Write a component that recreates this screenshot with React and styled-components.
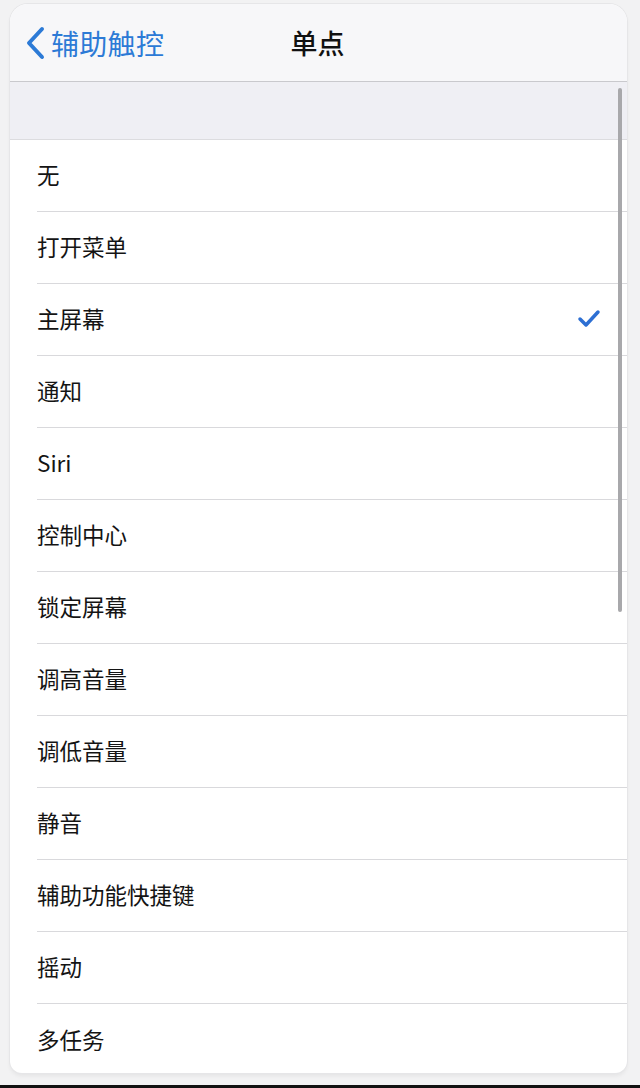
import styled, { createGlobalStyle } from "styled-components";

const Global = createGlobalStyle`
  html, body {
    margin: 0;
    padding: 0;
    background: #f2f2f3;
  }
  body {
    font-family: "Noto Sans CJK SC", "Noto Sans", sans-serif;
  }
`;

// whole photo area
const Page = styled.div`
  width: 640px;
  height: 1088px;
  box-sizing: border-box;
  padding: 4px 13px 0 10px;
  display: flex;
  flex-direction: column;
  overflow: hidden;
`;

const Card = styled.div`
  position: relative;
  height: 1069px;
  border-radius: 18px 18px 12px 12px;
  background: #ffffff;
  box-shadow: 0 0 0 1px #e6e6e8, 0 3px 4px rgba(0, 0, 0, 0.06);
  overflow: hidden;
  display: flex;
  flex-direction: column;
`;

const BottomBar = styled.div`
  margin: 12px -13px 0 -10px;
  height: 3px;
  background: #111;
`;

const NavBar = styled.div`
  height: 77px;
  flex-shrink: 0;
  background: #f7f7f9;
  border-bottom: 1px solid #c9c9cd;
  display: flex;
  align-items: center;
  position: relative;
`;

const Back = styled.div`
  display: flex;
  align-items: center;
  gap: 6px;
  padding-left: 15px;
  color: #2c7ad6;
  font-size: 28px;
  letter-spacing: 0.3px;
`;

const Title = styled.div`
  position: absolute;
  left: 0;
  right: 0;
  top: 0;
  bottom: 0;
  display: flex;
  align-items: center;
  justify-content: center;
  font-size: 27px;
  font-weight: 500;
  color: #111;
  pointer-events: none;
  padding-right: 2px;
`;

const SectionHead = styled.div`
  height: 57px;
  flex-shrink: 0;
  background: #efeff4;
  border-bottom: 1px solid #dcdcdf;
`;

const List = styled.div`
  display: flex;
  flex-direction: column;
  padding-left: 27px;
`;

const Row = styled.div`
  height: 72px;
  box-sizing: border-box;
  padding-bottom: 3px;
  flex-shrink: 0;
  display: flex;
  align-items: center;
  justify-content: space-between;
  padding-right: 26px;
  border-bottom: ${(p) => (p.$last ? "none" : "1px solid #d9d9dc")};
  font-size: 22.5px;
  color: #141414;
`;

const ScrollThumb = styled.div`
  position: absolute;
  right: 5px;
  top: 84px;
  width: 4px;
  height: 524px;
  border-radius: 2px;
  background: #a8a8ab;
`;

const Chevron = () => (
  <svg width="20" height="34" viewBox="0 0 20 34">
    <polyline
      points="17,3 4,17 17,31"
      fill="none"
      stroke="#2c7ad6"
      strokeWidth="4"
      strokeLinecap="round"
      strokeLinejoin="round"
    />
  </svg>
);

const Check = () => (
  <svg width="24" height="20" viewBox="0 0 24 20">
    <polyline
      points="3,11 9,17 21,4"
      fill="none"
      stroke="#2d6fd3"
      strokeWidth="3.5"
      strokeLinecap="round"
      strokeLinejoin="round"
    />
  </svg>
);

const items = [
  "无",
  "打开菜单",
  "主屏幕",
  "通知",
  "Siri",
  "控制中心",
  "锁定屏幕",
  "调高音量",
  "调低音量",
  "静音",
  "辅助功能快捷键",
  "摇动",
  "多任务",
];

export default function App() {
  return (
    <>
      <Global />
      <Page>
        <Card>
          <NavBar>
            <Back>
              <Chevron />
              <span>辅助触控</span>
            </Back>
            <Title>单点</Title>
          </NavBar>
          <SectionHead />
          <List>
            {items.map((t, i) => (
              <Row key={t} $last={i === items.length - 1}>
                <span>{t}</span>
                {t === "主屏幕" && <Check />}
              </Row>
            ))}
          </List>
          <ScrollThumb />
        </Card>
        <BottomBar />
      </Page>
    </>
  );
}
